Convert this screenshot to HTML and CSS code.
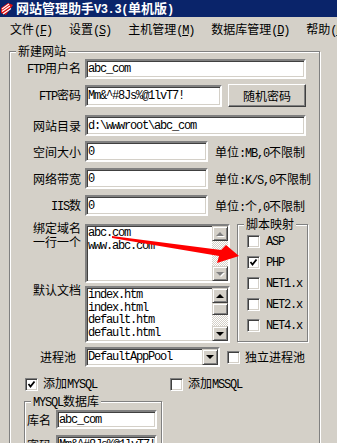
FILE: index.html
```html
<!DOCTYPE html>
<html>
<head>
    <meta charset="utf-8">
    <title>网站管理助手V3.3(单机版)</title>
    <link rel="stylesheet" href="styles.css">
</head>
<body>
<div class="window">
    <div class="titlebar">
        <svg class="logo" viewBox="0 0 14 14">
            <path d="M1 6 L8 1 L13 3 L6 13 L1 11 Z" fill="#e01010"/>
            <path d="M2 7 L9 2 M2 9.5 L10 4 M3 12 L11 6.5" stroke="#fff" stroke-width="1.2"/>
        </svg>
        <span class="title-text">网站管理助手<span class="a">V3.3(</span>单机版<span class="a">)</span></span>
    </div>
    <div class="menubar">
        <span>文件<span class="a">(<u>F</u>)</span></span>
        <span>设置<span class="a">(<u>S</u>)</span></span>
        <span>主机管理<span class="a">(<u>M</u>)</span></span>
        <span>数据库管理<span class="a">(<u>D</u>)</span></span>
        <span>帮助<span class="a">(<u>H</u>)</span></span>
    </div>

    <div class="group main">
        <span class="group-title">新建网站</span>

        <div class="row r1">
            <label class="lbl"><span class="a">FTP</span>用户名</label>
            <input class="edit w221 h20" value="abc_com">
        </div>
        <div class="row r2">
            <label class="lbl"><span class="a">FTP</span>密码</label>
            <input class="edit w137 h22" value="Mm&amp;^#8Js%@1lvT7!">
            <div class="button">随机密码</div>
        </div>
        <div class="row r3">
            <label class="lbl">网站目录</label>
            <input class="edit w221" value="d:\wwwroot\abc_com">
        </div>
        <div class="row r4">
            <label class="lbl">空间大小</label>
            <input class="edit w123" value="0">
            <span class="unit">单位<span class="a">:MB,0</span>不限制</span>
        </div>
        <div class="row r5">
            <label class="lbl">网络带宽</label>
            <input class="edit w123" value="0">
            <span class="unit">单位<span class="a">:K/S,0</span>不限制</span>
        </div>
        <div class="row r6">
            <label class="lbl"><span class="a">IIS</span>数</label>
            <input class="edit w123" value="0">
            <span class="unit">单位<span class="a">:</span>个<span class="a">,0</span>不限制</span>
        </div>

        <div class="domains">
            <div class="lists">
                <div class="row top">
                    <label class="lbl two">绑定域名<br>一行一个</label>
                    <div class="memo h59">
                        <div class="memo-text">abc.com<br>www.abc.com</div>
                        <div class="sb">
                            <div class="sb-btn"><i class="up off"></i></div>
                            <div class="sb-track"></div>
                            <div class="sb-btn"><i class="down off"></i></div>
                        </div>
                    </div>
                </div>
                <div class="row top">
                    <label class="lbl two">默认文档</label>
                    <div class="memo h57">
                        <div class="memo-text">index.htm<br>index.html<br>default.htm<br>default.html</div>
                        <div class="sb">
                            <div class="sb-btn"><i class="up"></i></div>
                            <div class="sb-btn thumb"></div>
                            <div class="sb-track"></div>
                            <div class="sb-btn"><i class="down"></i></div>
                        </div>
                    </div>
                </div>
            </div>

            <div class="group scripts">
                <span class="group-title">脚本映射</span>
                <div class="opt"><span class="cb"></span><span class="a">ASP</span></div>
                <div class="opt"><span class="cb"><svg viewBox="0 0 9 9"><path d="M1.5 4 L3.5 6.5 L7.5 1.5" fill="none" stroke="#000" stroke-width="1.8"/></svg></span><span class="a">PHP</span></div>
                <div class="opt"><span class="cb"></span><span class="a">NET1.x</span></div>
                <div class="opt"><span class="cb"></span><span class="a">NET2.x</span></div>
                <div class="opt"><span class="cb"></span><span class="a">NET4.x</span></div>
            </div>
        </div>

        <div class="row r7">
            <label class="lbl pool">进程池</label>
            <div class="combo">
                <span class="combo-text">DefaultAppPool</span>
                <span class="drop"><i class="down"></i></span>
            </div>
            <span class="cb pool-cb"></span>
            <span class="cb-text">独立进程池</span>
        </div>

        <div class="checks">
            <div class="check-item first">
                <span class="cb"><svg viewBox="0 0 9 9"><path d="M1.5 4 L3.5 6.5 L7.5 1.5" fill="none" stroke="#000" stroke-width="1.8"/></svg></span>
                <span class="cb-text">添加<span class="a">MYSQL</span></span>
            </div>
            <div class="check-item">
                <span class="cb"></span>
                <span class="cb-text">添加<span class="a">MSSQL</span></span>
            </div>
        </div>

        <div class="group mysql">
            <span class="group-title"><span class="a">MYSQL</span>数据库</span>
            <div class="row db1">
                <label class="db-lbl">库名</label>
                <input class="edit w101 h19" value="abc_com">
            </div>
            <div class="row db2">
                <label class="db-lbl">密码</label>
                <input class="edit w101 h19" value="Mm&amp;^#8Js%@1lvT7!">
            </div>
        </div>
    </div>

    <svg class="arrow" viewBox="0 0 337 443">
        <polygon points="112,236 221,250 226,245 239,256 217,263 219,256 112,238" fill="#ff0000"/>
    </svg>
</div>
</body>
</html>
```

FILE: styles.css
```css
body {
    margin: 0;
    background-color: #d4d0c8;
    font-family: "Noto Sans CJK SC", sans-serif;
    font-size: 12px;
    color: #000;
    overflow: hidden;
}
.window {
    position: relative;
    width: 337px;
    height: 443px;
    overflow: hidden;
}
.a {
    font-family: "Liberation Mono", monospace;
    font-size: 12px;
    letter-spacing: -1.2px;
}

/* title + menu */
.titlebar {
    height: 17px;
    background-color: #0a246a;
    color: #fff;
    font-weight: bold;
    font-size: 13px;
    display: flex;
    align-items: center;
}
.title-text {
    line-height: 17px;
    white-space: nowrap;
}
.titlebar .a {
    font-size: 12px;
    letter-spacing: -0.4px;
}
.logo {
    width: 14px;
    height: 14px;
    margin-right: 2px;
}
.menubar {
    height: 25px;
    display: flex;
    align-items: center;
    gap: 17px;
    padding-left: 10px;
    line-height: 14px;
    white-space: nowrap;
}

/* group boxes */
.group {
    position: relative;
    border: 1px solid #808080;
    box-shadow: inset 1px 1px #fff, 1px 1px #fff;
    box-sizing: border-box;
}
.group-title {
    position: absolute;
    top: -8px;
    left: 6px;
    padding: 0 2px;
    line-height: 14px;
    background-color: #d4d0c8;
    white-space: nowrap;
}
.main {
    margin: 9px 0 0 9px;
    width: 311px;
    height: 430px;
    padding-top: 7px;
}

/* rows */
.row {
    display: flex;
    align-items: center;
}
.row.top {
    align-items: flex-start;
}
.lbl {
    flex: none;
    width: 71px;
    margin-right: 4px;
    text-align: right;
    line-height: 14px;
    white-space: nowrap;
}
.lbl.two {
    margin-top: -3px;
}
.lbl.pool {
    width: 66px;
    margin-right: 9px;
}
.r2 { margin-top: 5px; }
.r3 { margin-top: 8px; }
.r4 { margin-top: 5px; }
.r5 { margin-top: 6px; }
.r6 { margin-top: 6px; }
.r7 { margin-top: 4px; }

/* sunken edits */
.edit, .memo, .combo {
    box-sizing: border-box;
    border: 2px solid;
    border-color: #808080 #fff #fff #808080;
    box-shadow: inset 1px 1px #404040, inset -1px -1px #d4d0c8;
    background-color: #fff;
}
.edit {
    height: 21px;
    margin: 0;
    padding: 0 1px;
    font-family: "Liberation Mono", monospace;
    font-size: 12px;
    letter-spacing: -1.2px;
    color: #000;
    outline: none;
}
.w221 { width: 221px; }
.w137 { width: 137px; }
.w123 { width: 123px; }
.w101 { width: 101px; }
.h20 { height: 20px; }
.h22 { height: 22px; }
.h19 { height: 19px; }

.button {
    box-sizing: border-box;
    width: 78px;
    height: 23px;
    margin-left: 6px;
    border: 1px solid;
    border-color: #fff #404040 #404040 #fff;
    box-shadow: inset -1px -1px #808080;
    display: flex;
    align-items: center;
    justify-content: center;
}
.unit {
    margin-left: 7px;
    white-space: nowrap;
}

/* multi-line boxes */
.domains {
    display: flex;
    margin-top: 8px;
}
.lists {
    display: flex;
    flex-direction: column;
    gap: 3px;
}
.memo {
    width: 145px;
    display: flex;
}
.h59 { height: 59px; }
.h57 { height: 57px; }
.memo-text {
    flex: 1;
    padding: 1px 0 0 1px;
    font-family: "Liberation Mono", monospace;
    font-size: 12px;
    letter-spacing: -1.2px;
    line-height: 12.5px;
    white-space: nowrap;
    overflow: hidden;
}
.sb {
    width: 16px;
    display: flex;
    flex-direction: column;
    background: repeating-conic-gradient(#d4d0c8 0 25%, #fff 0 50%) 0 0 / 2px 2px;
}
.sb-btn, .drop {
    box-sizing: border-box;
    flex: none;
    width: 16px;
    height: 15px;
    border: 1px solid;
    border-color: #d4d0c8 #404040 #404040 #d4d0c8;
    box-shadow: inset 1px 1px #fff, inset -1px -1px #808080;
    background-color: #d4d0c8;
    display: flex;
    align-items: center;
    justify-content: center;
}
.sb-btn.thumb {
    height: 12px;
}
.sb-track {
    flex: 1;
}
.up, .down {
    width: 0;
    height: 0;
    border-left: 4px solid transparent;
    border-right: 4px solid transparent;
}
.up {
    border-bottom: 4px solid #000;
}
.down {
    border-top: 4px solid #000;
}
.up.off {
    border-bottom-color: #808080;
    filter: drop-shadow(1px 1px 0 #fff);
}
.down.off {
    border-top-color: #808080;
    filter: drop-shadow(1px 1px 0 #fff);
}

/* script mapping */
.scripts {
    flex: none;
    width: 71px;
    height: 118px;
    margin-left: 7px;
    padding: 10px 0 0 9px;
}
.opt {
    display: flex;
    align-items: center;
    height: 13px;
    margin-bottom: 8px;
    white-space: nowrap;
}
.opt .a {
    margin-left: 6px;
}
.cb {
    flex: none;
    box-sizing: border-box;
    width: 13px;
    height: 13px;
    border: 1px solid;
    border-color: #808080 #fff #fff #808080;
    box-shadow: inset 1px 1px #404040, inset -1px -1px #d4d0c8;
    background-color: #fff;
    display: flex;
    align-items: center;
    justify-content: center;
}
.cb svg {
    width: 9px;
    height: 9px;
}
.cb-text {
    margin-left: 5px;
    line-height: 14px;
    white-space: nowrap;
}

/* pool */
.combo {
    width: 135px;
    height: 20px;
    display: flex;
    align-items: center;
    justify-content: space-between;
}
.combo-text {
    padding-left: 1px;
    font-family: "Liberation Mono", monospace;
    font-size: 12px;
    letter-spacing: -1.2px;
}
.drop {
    height: 16px;
}
.pool-cb {
    margin-left: 7px;
}

/* database */
.checks {
    display: flex;
    margin-top: 11px;
    padding-left: 15px;
    height: 12px;
    align-items: center;
}
.check-item {
    display: flex;
    align-items: center;
}
.check-item.first {
    width: 145px;
}
.mysql {
    margin: 11px 0 0 14px;
    width: 138px;
    height: 60px;
    padding: 8px 0 0 2px;
}
.db-lbl {
    width: 24px;
    margin-right: 5px;
    line-height: 14px;
}
.db2 {
    margin-top: 6px;
}

.arrow {
    position: absolute;
    left: 0;
    top: 0;
    width: 337px;
    height: 443px;
    pointer-events: none;
}
```
